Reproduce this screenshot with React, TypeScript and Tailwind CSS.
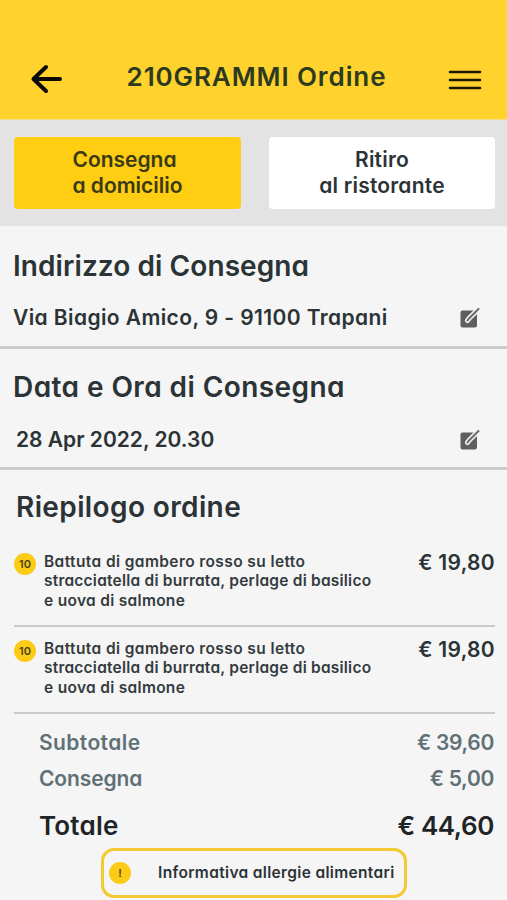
import React from 'react';

interface OrderItem {
  id: number;
  qty: string;
  lines: { text: string; tracking: string }[];
  price: string;
}

const DISH = [
  { text: 'Battuta di gambero rosso su letto', tracking: 'tracking-[0.4px]' },
  { text: 'stracciatella di burrata, perlage di basilico', tracking: 'tracking-[0.22px]' },
  { text: 'e uova di salmone', tracking: 'tracking-[0.3px]' },
];

const ITEMS: OrderItem[] = [
  { id: 1, qty: '10', lines: DISH, price: '€ 19,80' },
  { id: 2, qty: '10', lines: DISH, price: '€ 19,80' },
];

export default function App() {
  return (
    <div className="w-[507px] h-[900px] overflow-hidden bg-[#f5f5f5] text-[#2b3336] font-semibold font-['Inter',sans-serif] [font-feature-settings:'cv11'] whitespace-nowrap">
      {/* Header */}
      <header className="h-[120px] pt-[57px] pl-[30px] pr-[25px] flex items-start justify-between bg-[#ffd22e] border-b border-[#f3dd8b]">
        <BackArrow />
        <h1 className="ml-[2px] text-[26px] leading-[40px] tracking-[0.9px] text-[#2c3a1f]">210GRAMMI Ordine</h1>
        <MenuLines />
      </header>

      {/* Delivery mode */}
      <div className="h-[106px] px-[14px] pt-[17px] pr-[12px] flex gap-[28px] bg-[#e3e3e3]">
        <button className="w-[227px] h-[72px] pr-[6px] rounded bg-[#ffcd12] text-[#3a3a14] text-[21px] leading-[26px]">
          Consegna
          <br />
          <span className="ml-[6px]">a domicilio</span>
        </button>
        <button className="w-[226px] h-[72px] rounded bg-white text-[21px] leading-[26px] tracking-[0.2px]">
          Ritiro
          <br />
          al ristorante
        </button>
      </div>

      <section className="h-[123px] pt-[22px] pl-[12px] pr-[27px] border-b-[3px] border-[#cbcccd]">
        <h2 className="ml-px text-[28px] leading-[36px] tracking-[0.08px]">Indirizzo di Consegna</h2>
        <div className="mt-[19px] ml-px flex items-center justify-between">
          <span className="text-[21px] leading-[30px] tracking-[0.4px]">Via Biagio Amico, 9 - 91100 Trapani</span>
          <EditIcon />
        </div>
      </section>

      <section className="h-[121px] pt-[20px] pl-[12px] pr-[27px] border-b-[3px] border-[#cbcccd]">
        <h2 className="ml-px text-[28px] leading-[36px] tracking-[0.42px]">Data e Ora di Consegna</h2>
        <div className="mt-[20px] ml-px flex items-center justify-between">
          <span className="ml-[3px] text-[21px] leading-[30px]">28 Apr 2022, 20.30</span>
          <EditIcon />
        </div>
      </section>

      <section className="pt-[19px] pl-[14px] pr-[12px]">
        <h2 className="ml-[2px] text-[28px] leading-[36px] tracking-[0.38px]">Riepilogo ordine</h2>
        <div className="mt-[15px]">
          {ITEMS.map((item) => (
            <div key={item.id} className="h-[87px] pt-[13px] flex items-start border-b-2 border-[#c9cacb]">
              <Badge>{item.qty}</Badge>
              <div className="ml-[8px] -mt-px text-[15.5px] leading-[19.4px] text-[#343b3e]">
                {item.lines.map((line) => (
                  <div key={line.text} className={line.tracking}>{line.text}</div>
                ))}
              </div>
              <span className="ml-auto -mt-px text-[21px] leading-[22px] tracking-[0.3px]">{item.price}</span>
            </div>
          ))}
        </div>
      </section>

      {/* Totals */}
      <section className="pt-[11px] pl-[39px] pr-[13px]">
        <TotalRow label="Subtotale" value="€ 39,60" tracking="tracking-[0.4px]" />
        <TotalRow label="Consegna" value="€ 5,00" tracking="tracking-[-0.1px]" />
        <div className="mt-[8px] flex justify-between text-[26px] leading-[42px] text-[#1f2426]">
          <span className="tracking-[0.2px]">Totale</span>
          <span className="tracking-[-0.4px]">€ 44,60</span>
        </div>
      </section>

      <button className="mt-px ml-[101px] w-[306px] h-[50px] pl-[5px] flex items-center rounded-[13px] border-[3px] border-[#f3c934]">
        <Badge>!</Badge>
        <span className="ml-[27px] text-[15.5px] tracking-[0.34px]">Informativa allergie alimentari</span>
      </button>
    </div>
  );
}

function TotalRow({ label, value, tracking }: { label: string; value: string; tracking: string }) {
  return (
    <div className="flex justify-between text-[21px] leading-[36px] text-[#5f7076]">
      <span className={tracking}>{label}</span>
      <span className="tracking-[-0.3px]">{value}</span>
    </div>
  );
}

function Badge({ children }: { children: React.ReactNode }) {
  return (
    <span className="w-[22px] h-[22px] shrink-0 flex items-center justify-center rounded-full bg-[#fbcb16] text-[11px] text-[#4a431c]">
      {children}
    </span>
  );
}

function BackArrow() {
  return (
    <svg className="mt-[7px]" width="33" height="30" viewBox="0 0 33 30" fill="none" stroke="#0b0903" strokeWidth="4" strokeLinecap="round" strokeLinejoin="round">
      <path d="M16 3 L3.5 15 L16 27 M3.5 15 H30" />
    </svg>
  );
}

function MenuLines() {
  return (
    <svg className="mt-[12px]" width="34" height="22" viewBox="0 0 34 22" stroke="#1d1804" strokeWidth="2.6" strokeLinecap="round">
      <path d="M2 3 H32 M2 11 H32 M2 19 H32" />
    </svg>
  );
}

function EditIcon() {
  return (
    <svg width="20" height="20" viewBox="0 0 20 20" fill="none">
      <rect x="0.5" y="2.5" width="16.5" height="17" rx="2" fill="#5f5f5f" />
      <path d="M18.5 1 L9 10.5 L7.5 12.5" stroke="#f5f5f5" strokeWidth="5" strokeLinecap="round" />
      <path d="M18.5 1 L9 10.5 L7.5 12.5" stroke="#6b6b6b" strokeWidth="2" strokeLinecap="round" />
    </svg>
  );
}
